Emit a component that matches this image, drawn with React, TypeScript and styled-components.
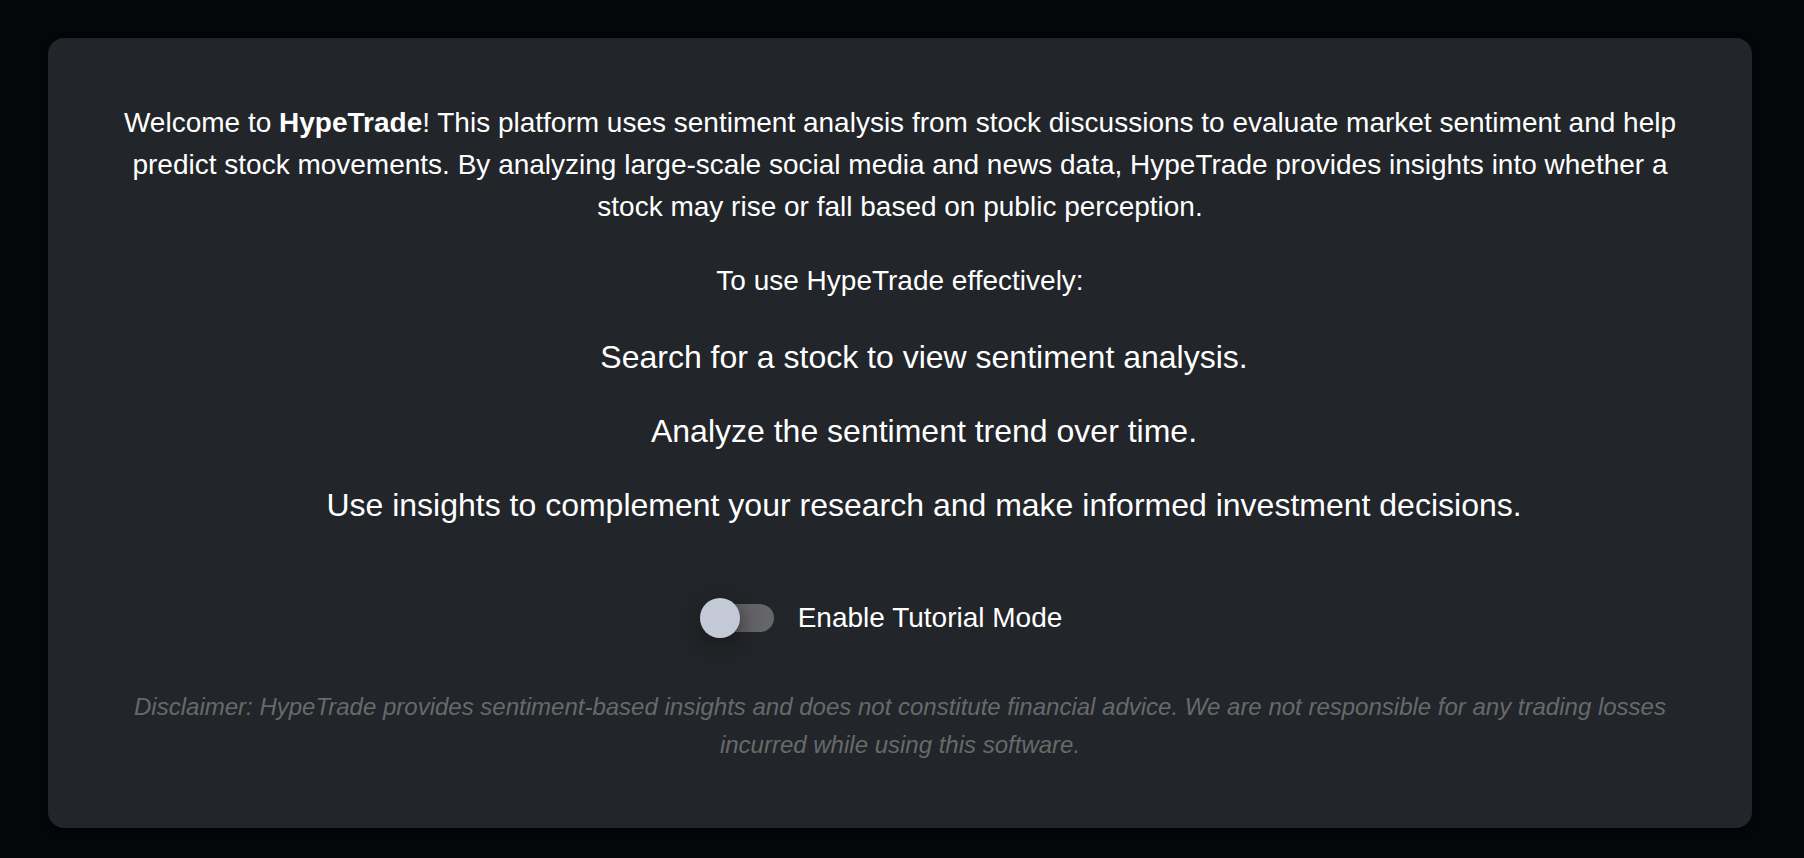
import React, { useState } from "react";
import styled, { createGlobalStyle } from "styled-components";

const GlobalStyle = createGlobalStyle`
  * { box-sizing: border-box; }
  body {
    margin: 0;
    background: #05060a;
    color: #fff;
    font-family: "Liberation Sans", Helvetica, Arial, sans-serif;
  }
`;

const Page = styled.main`
  padding: 38px 52px 30px 48px;
`;

const Card = styled.section`
  display: flex;
  flex-direction: column;
  gap: 32px;
  padding: 64px 72px;
  border-radius: 16px;
  background: #222529;
  box-shadow: 0 4px 8px rgba(0, 0, 0, 0.3);
  text-align: center;
`;

const Text = styled.p`
  margin: 0;
  font-size: 28px;
  line-height: 42px;
`;

const Steps = styled.ul`
  display: flex;
  flex-direction: column;
  gap: 28px;
  margin: 0;
  padding: 0 0 0 48px;
  list-style: none;
`;

const Step = styled.li`
  font-size: 32px;
  line-height: 46px;
`;

const SwitchLabel = styled.label`
  display: flex;
  align-items: center;
  align-self: center;
  gap: 24px;
  padding: 37px 38px 17px 0;
  font-size: 28px;
  line-height: 42px;
  cursor: pointer;
`;

const Switch = styled.input`
  appearance: none;
  display: flex;
  align-items: center;
  width: 74px;
  height: 28px;
  margin: 0;
  border-radius: 14px;
  background: #666669;
  cursor: pointer;

  &::before {
    content: "";
    width: 40px;
    height: 40px;
    border-radius: 50%;
    background: #c4c9d7;
    box-shadow: 0 6px 24px rgba(24, 20, 24, 0.8);
  }

  &:checked::before {
    margin-left: auto;
  }
`;

const Disclaimer = styled.p`
  margin: 0;
  color: #69696a;
  font-size: 24px;
  font-style: italic;
  line-height: 38px;
`;

export default function App() {
  const [tutorial, setTutorial] = useState(false);
  return (
    <Page>
      <GlobalStyle />
      <Card>
        <Text>
          Welcome to <strong>HypeTrade</strong>! This platform uses sentiment analysis from stock
          discussions to evaluate market sentiment and help predict stock movements. By analyzing
          large-scale social media and news data, HypeTrade provides insights into whether a stock
          may rise or fall based on public perception.
        </Text>
        <Text>To use HypeTrade effectively:</Text>
        <Steps>
          <Step>Search for a stock to view sentiment analysis.</Step>
          <Step>Analyze the sentiment trend over time.</Step>
          <Step>Use insights to complement your research and make informed investment decisions.</Step>
        </Steps>
        <SwitchLabel>
          <Switch
            type="checkbox"
            role="switch"
            checked={tutorial}
            onChange={(e) => setTutorial(e.target.checked)}
          />
          Enable Tutorial Mode
        </SwitchLabel>
        <Disclaimer>
          Disclaimer: HypeTrade provides sentiment-based insights and does not constitute financial
          advice. We are not responsible for any trading losses incurred while using this software.
        </Disclaimer>
      </Card>
    </Page>
  );
}
